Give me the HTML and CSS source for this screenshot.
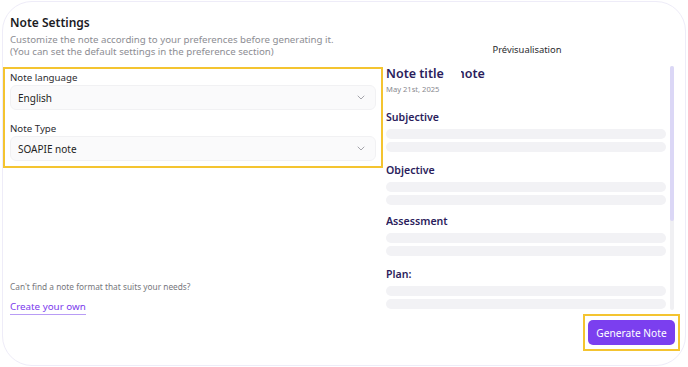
FILE: index.html
```html
<!DOCTYPE html>
<html lang="en">
<head>
    <meta charset="UTF-8">
    <meta name="viewport" content="width=device-width, initial-scale=1.0">
    <title>Note Settings</title>
    <link rel="stylesheet" href="styles.css">
</head>
<body>
    <div class="card">
        <div class="settings">
            <h1 class="settings-title">Note Settings</h1>
            <p class="settings-sub">Customize the note according to your preferences before generating it.<br>(You can set the default settings in the preference section)</p>

            <div class="highlight fields">
                <label class="field-label">Note language</label>
                <div class="select">
                    <span>English</span>
                    <svg class="chevron" width="8" height="5" viewBox="0 0 8 5"><path d="M1 1l3 3 3-3" fill="none" stroke="#9a9aa2" stroke-width="0.9" stroke-linecap="round" stroke-linejoin="round"/></svg>
                </div>
                <label class="field-label second">Note Type</label>
                <div class="select">
                    <span>SOAPIE note</span>
                    <svg class="chevron" width="8" height="5" viewBox="0 0 8 5"><path d="M1 1l3 3 3-3" fill="none" stroke="#9a9aa2" stroke-width="0.9" stroke-linecap="round" stroke-linejoin="round"/></svg>
                </div>
            </div>

            <div class="settings-foot">
                <p class="foot-text">Can't find a note format that suits your needs?</p>
                <a class="foot-link" href="#">Create your own</a>
            </div>
        </div>

        <div class="preview">
            <div class="preview-head">Prévisualisation</div>
            <div class="preview-row">
                <div class="preview-body">
                    <div class="note-title">Note title<span class="note-cut">note</span></div>
                    <div class="note-date">May 21st, 2025</div>

                    <div class="section">
                        <h3>Subjective</h3>
                        <div class="bar"></div>
                        <div class="bar"></div>
                    </div>
                    <div class="section short">
                        <h3>Objective</h3>
                        <div class="bar"></div>
                        <div class="bar"></div>
                    </div>
                    <div class="section">
                        <h3>Assessment</h3>
                        <div class="bar"></div>
                        <div class="bar"></div>
                    </div>
                    <div class="section">
                        <h3>Plan:</h3>
                        <div class="bar"></div>
                        <div class="bar"></div>
                    </div>
                </div>
                <div class="scroll-track"><div class="scroll-thumb"></div></div>
            </div>
            <div class="actions">
                <div class="highlight btn-wrap">
                    <button class="btn">Generate Note</button>
                </div>
            </div>
        </div>
    </div>
</body>
</html>
```

FILE: styles.css
```css
* {
    box-sizing: border-box;
}

body {
    margin: 0;
    padding: 0;
    background-color: #fff;
    font-family: "Noto Sans", Arial, sans-serif;
    color: #222;
}

.card {
    margin: 1px 2px 0;
    height: 365px;
    border: 1px solid #eeecf8;
    border-radius: 30px;
    background: #fff;
    display: flex;
    overflow: hidden;
}

/* left column */
.settings {
    width: 380px;
    padding-top: 13px;
    padding-bottom: 50px;
    display: flex;
    flex-direction: column;
}

.settings-title {
    margin: 0;
    padding-left: 7px;
    font-size: 12px;
    line-height: 16px;
    font-weight: 600;
    color: #1b1b1f;
}

.settings-sub {
    margin: 3px 0 0;
    padding-left: 7px;
    font-size: 9.7px;
    line-height: 12px;
    color: #8d8d93;
}

.highlight {
    border: 2px solid #f4c430;
}

.fields {
    margin-top: 9px;
    padding: 3px 5px 5px;
}

.field-label {
    display: block;
    font-size: 9.7px;
    line-height: 12px;
    color: #2c2c30;
}

.field-label.second {
    margin-top: 13px;
}

.select {
    margin-top: 1px;
    height: 25px;
    padding: 0 10px 0 7px;
    background: #fafafb;
    border: 1px solid #f1f1f3;
    border-radius: 6px;
    display: flex;
    align-items: center;
    justify-content: space-between;
    font-size: 10px;
    color: #1f1f23;
}

.settings-foot {
    margin-top: auto;
    padding-left: 7px;
}

.foot-text {
    margin: 0;
    font-size: 8.3px;
    line-height: 12px;
    color: #77777d;
}

.foot-link {
    display: inline-block;
    margin-top: 5px;
    font-size: 9.8px;
    line-height: 14px;
    color: #7c3aed;
    text-decoration: none;
    border-bottom: 1px solid #b89cf5;
}

/* right column */
.preview {
    flex: 1;
    padding: 42px 5px 0 3px;
    display: flex;
    flex-direction: column;
}

.preview-head {
    width: 282px;
    text-align: center;
    font-size: 9.4px;
    line-height: 12px;
    color: #2a2a2e;
}

.preview-row {
    margin-top: 9px;
    height: 245px;
    display: flex;
    gap: 4px;
}

.preview-body {
    width: 280px;
    overflow: hidden;
}

.note-title {
    font-size: 12.5px;
    line-height: 18px;
    font-weight: 600;
    color: #2b1d5c;
    white-space: nowrap;
}

.note-cut {
    display: inline-block;
    vertical-align: top;
    margin-left: 17px;
    width: 24px;
    overflow: hidden;
    direction: rtl;
}

.note-date {
    margin-top: 1px;
    font-size: 7.6px;
    line-height: 10px;
    color: #8a8a90;
}

.section {
    margin-bottom: 10px;
}

.section.short {
    margin-bottom: 8px;
}

.note-date + .section {
    margin-top: 15px;
}

.section h3 {
    margin: 0 0 4px;
    font-size: 10.6px;
    line-height: 16px;
    font-weight: 600;
    color: #2b1d5c;
}

.bar {
    height: 10px;
    border-radius: 5px;
    background: #f2f2f5;
}

.bar + .bar {
    margin-top: 3px;
}

.scroll-track {
    width: 4px;
    margin-top: 1px;
    border-radius: 2px;
    background: #f0f0f3;
}

.scroll-thumb {
    height: 155px;
    border-radius: 2px;
    background: #dbd7f6;
}

.actions {
    margin-top: 4px;
    display: flex;
    justify-content: flex-end;
}

.btn-wrap {
    padding: 4px 3px;
}

.btn {
    display: block;
    width: 87px;
    height: 25px;
    border: none;
    border-radius: 5px;
    background: #7b3fef;
    color: #fff;
    font-family: inherit;
    font-size: 10.2px;
    padding: 0;
}
```
